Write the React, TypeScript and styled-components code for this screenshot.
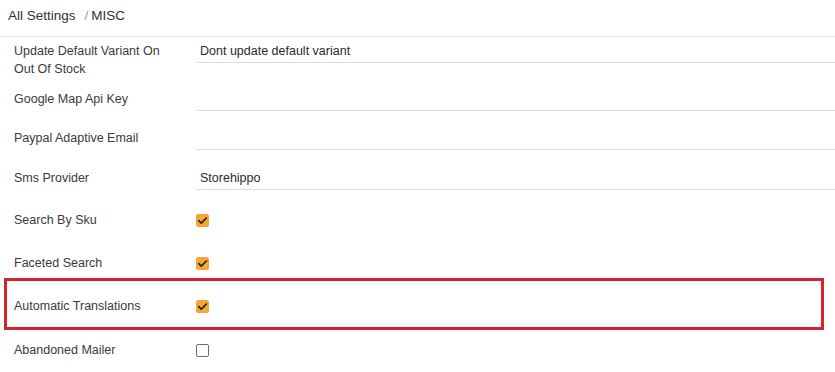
import React from "react"
import styled, { createGlobalStyle } from "styled-components"

const GlobalStyle = createGlobalStyle`
  html, body {
    margin: 0;
    padding: 0;
    background: #ffffff;
  }
  body {
    font-family: "Liberation Sans", Arial, sans-serif;
    color: #333333;
  }
`

type Setting = {
  label: string
  kind: "text" | "check"
  value?: string
  checked?: boolean
  h: number
  marked?: boolean
}

const settings: Setting[] = [
  { label: "Update Default Variant On Out Of Stock", kind: "text", value: "Dont update default variant", h: 48 },
  { label: "Google Map Api Key", kind: "text", value: "", h: 39 },
  { label: "Paypal Adaptive Email", kind: "text", value: "", h: 40 },
  { label: "Sms Provider", kind: "text", value: "Storehippo", h: 28 },
  { label: "Search By Sku", kind: "check", checked: true, h: 52 },
  { label: "Faceted Search", kind: "check", checked: true, h: 34 },
  { label: "Automatic Translations", kind: "check", checked: true, h: 52, marked: true },
  { label: "Abandoned Mailer", kind: "check", checked: false, h: 36 },
]

const Page = styled.div`
  width: 835px;
  display: flex;
  flex-direction: column;
`

const Header = styled.div`
  height: 37px;
  box-sizing: border-box;
  display: flex;
  align-items: center;
  padding: 0 0 6px 8px;
  border-bottom: 1px solid #e3e3e3;
  font-size: 13.5px;
  color: #333;
`

const Crumb = styled.span`
  margin-left: 9px;
`

const Slash = styled.span`
  color: #9a9a9a;
  margin-right: 3px;
`

const FieldRow = styled.div<{ $h: number }>`
  display: flex;
  align-items: flex-start;
  height: ${(p) => p.$h}px;
  padding-left: 14px;
  box-sizing: border-box;
`

const CheckRow = styled.div<{ $h: number; $marked?: boolean }>`
  display: flex;
  align-items: center;
  height: ${(p) => p.$h}px;
  box-sizing: border-box;
  padding-top: 4px;
  padding-left: ${(p) => (p.$marked ? 7 : 14)}px;
  margin: ${(p) => (p.$marked ? "0 11px 0 4px" : "0")};
  border: ${(p) => (p.$marked ? "3px solid #d8232f" : "none")};
`

const Label = styled.div<{ $top?: number }>`
  width: 182px;
  flex: none;
  box-sizing: border-box;
  padding-top: ${(p) => p.$top ?? 0}px;
  padding-right: 14px;
  font-size: 12.5px;
  line-height: 18px;
  color: #3a3a3a;
`

const Field = styled.div`
  flex: 1;
  height: 26px;
  box-sizing: border-box;
  padding: 5px 4px 2px;
  border-bottom: 1px solid #dedede;
  font-size: 12.5px;
  line-height: 18px;
  color: #2a2a2a;
`

const Box = styled.span<{ $on: boolean }>`
  width: 13px;
  height: 13px;
  box-sizing: border-box;
  border-radius: 2px;
  display: inline-flex;
  align-items: center;
  justify-content: center;
  background: ${(p) => (p.$on ? "#f5a733" : "#ffffff")};
  border: 1px solid ${(p) => (p.$on ? "#f5a733" : "#6b6b6b")};
`

function Check({ on }: { on: boolean }) {
  return (
    <Box $on={on}>
      {on && (
        <svg width="11" height="11" viewBox="0 0 11 11">
          <path d="M1.8 5.6 L4.3 8.2 L9.4 3" fill="none" stroke="#2b2111" strokeWidth="1.7" strokeLinecap="round" strokeLinejoin="round" />
        </svg>
      )}
    </Box>
  )
}

export default function App() {
  return (
    <>
      <GlobalStyle />
      <Page>
        <Header>
          All Settings
          <Crumb>
            <Slash>/</Slash>MISC
          </Crumb>
        </Header>
        {settings.map((s) =>
          s.kind === "text" ? (
            <FieldRow key={s.label} $h={s.h}>
              <Label $top={5}>{s.label}</Label>
              <Field>{s.value}</Field>
            </FieldRow>
          ) : (
            <CheckRow key={s.label} $h={s.h} $marked={s.marked}>
              <Label>{s.label}</Label>
              <Check on={!!s.checked} />
            </CheckRow>
          )
        )}
      </Page>
    </>
  )
}
